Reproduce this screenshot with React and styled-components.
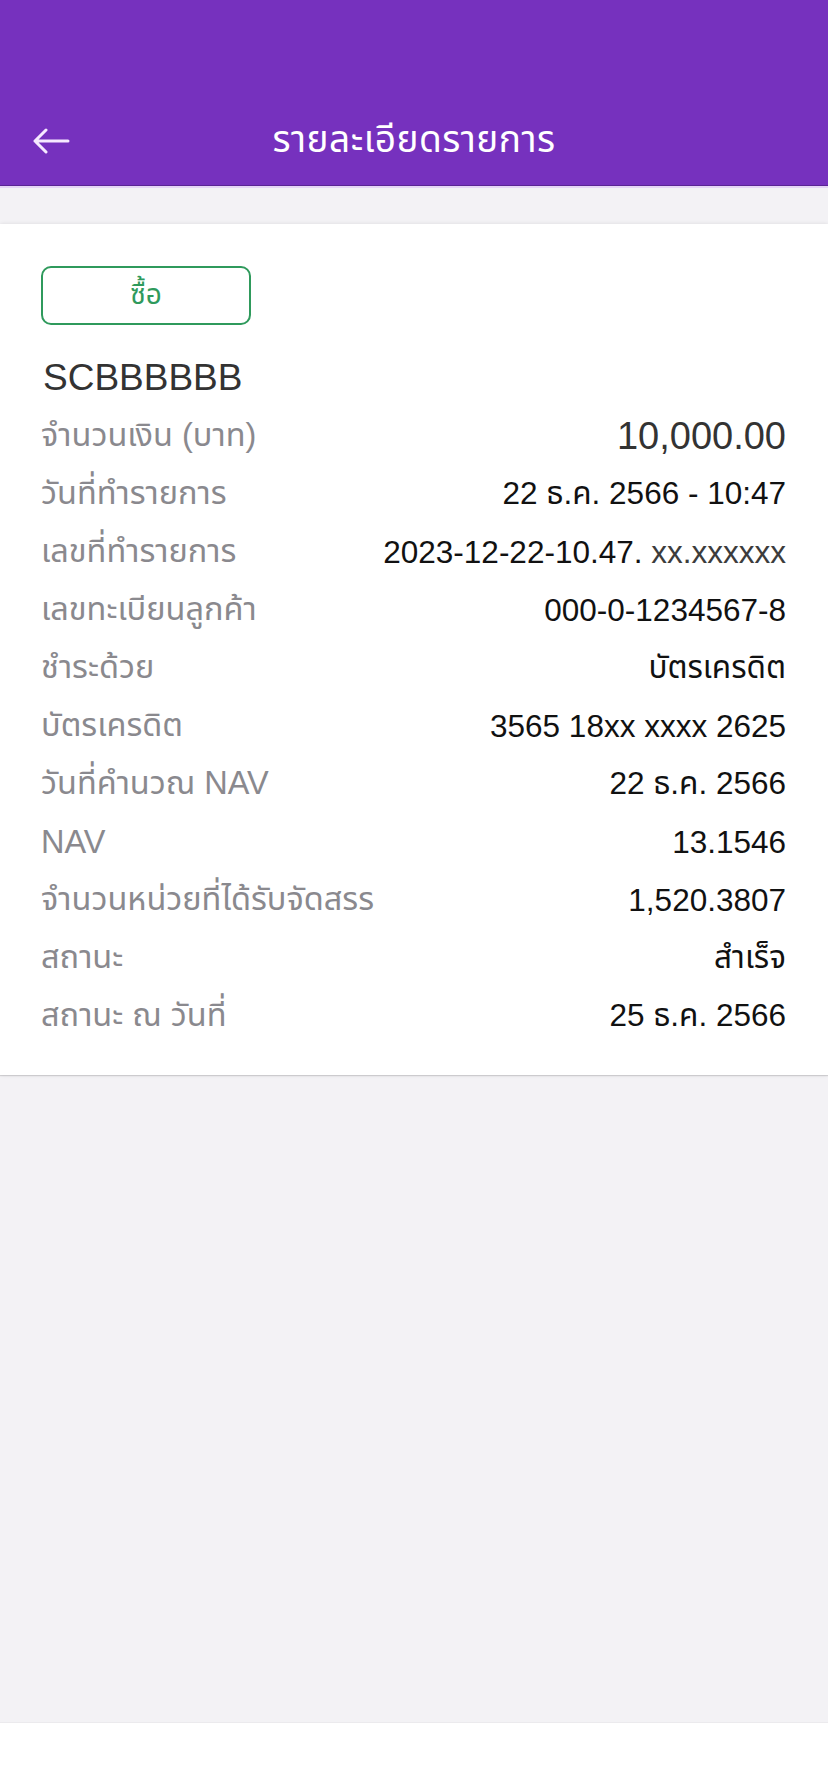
import React from 'react';
import styled, { createGlobalStyle } from 'styled-components';

const FONT = '"Liberation Sans", "Noto Sans Thai", "Noto Sans", sans-serif';

const GlobalStyle = createGlobalStyle`
  html, body {
    margin: 0;
    padding: 0;
    background: #f3f2f5;
    font-family: ${FONT};
  }
`;

const Page = styled.div`
  min-height: 1792px;
  display: flex;
  flex-direction: column;
  background: #f3f2f5;
`;

const Header = styled.header`
  height: 186px;
  box-sizing: border-box;
  padding-top: 96px;
  background: #7631be;
  border-bottom: 1px solid #5a2494;
  box-shadow: 0 2px 0 #e6d5f6;
`;

const NavBar = styled.div`
  position: relative;
  height: 90px;
  display: flex;
  align-items: center;
  justify-content: center;
`;

const BackButton = styled.button`
  position: absolute;
  left: 32px;
  top: 50%;
  transform: translateY(-50%);
  padding: 0;
  border: none;
  background: none;
  display: flex;
`;

const Title = styled.h1`
  margin: 0;
  color: #ffffff;
  font-size: 37px;
  font-weight: 400;
  letter-spacing: 0.5px;
`;

const Body = styled.main`
  flex: 1;
  padding-top: 38px;
`;

const Card = styled.section`
  background: #ffffff;
  padding: 42px 42px 30px 41px;
  box-shadow: 0 0 4px rgba(0, 0, 0, 0.1), 0 1px 1px rgba(0, 0, 0, 0.12);
`;

const TypeBadge = styled.div`
  width: 210px;
  height: 59px;
  box-sizing: border-box;
  border: 2px solid #2f9a5c;
  border-radius: 10px;
  display: flex;
  align-items: center;
  justify-content: center;
  color: #2f9a5c;
  font-size: 28px;
`;

const FundName = styled.h2`
  margin: 28px 0 4px 2px;
  font-size: 37px;
  line-height: 50px;
  font-weight: 400;
  color: #333333;
`;

const Row = styled.div`
  height: 58px;
  display: flex;
  align-items: center;
  justify-content: space-between;
`;

const Label = styled.span`
  color: #8a898e;
  font-size: 32.5px;
`;

const Value = styled.span`
  color: ${(props) => (props.big ? '#333333' : '#111111')};
  font-size: ${(props) => (props.big ? '38px' : '31.5px')};
  text-align: right;
  white-space: nowrap;
`;

const Muted = styled.span`
  color: #3c3c3c;
`;

const BottomBar = styled.footer`
  height: 69px;
  background: #ffffff;
  border-top: 1px solid #ebeaed;
`;

const BackArrow = () => (
  <svg width="38" height="26" viewBox="0 0 38 26" fill="none">
    <path
      d="M36 13H3M14 2L3 13l11 11"
      stroke="#f6e9ff"
      strokeWidth="3"
      strokeLinecap="round"
      strokeLinejoin="round"
    />
  </svg>
);

const rows = [
  { label: 'วันที่ทำรายการ', value: '22 ธ.ค. 2566 - 10:47' },
  {
    label: 'เลขที่ทำรายการ',
    value: (
      <>
        2023-12-22-10.47. <Muted>xx.xxxxxx</Muted>
      </>
    ),
  },
  { label: 'เลขทะเบียนลูกค้า', value: '000-0-1234567-8' },
  { label: 'ชำระด้วย', value: 'บัตรเครดิต' },
  { label: 'บัตรเครดิต', value: '3565 18xx xxxx 2625' },
  { label: 'วันที่คำนวณ NAV', value: '22 ธ.ค. 2566' },
  { label: 'NAV', value: '13.1546' },
  { label: 'จำนวนหน่วยที่ได้รับจัดสรร', value: '1,520.3807' },
  { label: 'สถานะ', value: 'สำเร็จ' },
  { label: 'สถานะ ณ วันที่', value: '25 ธ.ค. 2566' },
];

export default function App() {
  return (
    <Page>
      <GlobalStyle />
      <Header>
        <NavBar>
          <BackButton aria-label="back">
            <BackArrow />
          </BackButton>
          <Title>รายละเอียดรายการ</Title>
        </NavBar>
      </Header>
      <Body>
        <Card>
          <TypeBadge>ซื้อ</TypeBadge>
          <FundName>SCBBBBBB</FundName>
          <Row>
            <Label>จำนวนเงิน (บาท)</Label>
            <Value big>10,000.00</Value>
          </Row>
          {rows.map((row) => (
            <Row key={row.label}>
              <Label>{row.label}</Label>
              <Value>{row.value}</Value>
            </Row>
          ))}
        </Card>
      </Body>
      <BottomBar />
    </Page>
  );
}
